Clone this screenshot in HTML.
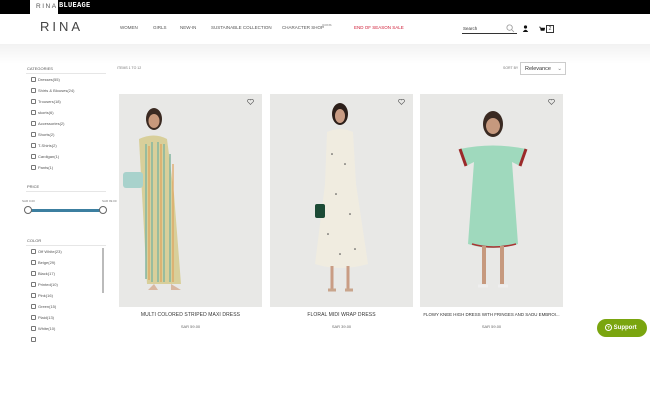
<!DOCTYPE html>
<html><head><meta charset="utf-8"><style>
*{margin:0;padding:0;box-sizing:border-box}
body{width:650px;height:400px;background:#fff;font-family:"Liberation Sans",sans-serif;position:relative;overflow:hidden;color:#333}
.abs{position:absolute}
.top{left:0;top:0;width:650px;height:14px;background:#000}
.t{font-size:4.5px;color:#555;white-space:nowrap}
.cb{position:absolute;left:31px;width:5px;height:5px;border:0.6px solid #777;border-radius:1px}
.cl{position:absolute;left:38px;font-size:4px;color:#555}
.img{position:absolute;top:94px;width:143px;height:213px;background:#e8e8e6;overflow:hidden}
.name{position:absolute;top:312px;font-size:5px;color:#333;text-align:center;width:143px;letter-spacing:.1px;white-space:nowrap;overflow:hidden}
.price{position:absolute;top:324px;font-size:4px;color:#666;text-align:center;width:143px}
</style></head><body>
<div class="abs top"></div>
<div class="abs" style="left:30px;top:0;width:28px;height:14px;background:#fff"></div>
<div class="abs" style="left:36px;top:3px;font-size:6.5px;letter-spacing:1.5px;color:#555">RINA</div>
<div class="abs" style="left:59px;top:2px;font-size:7px;font-weight:bold;color:#fff;font-family:'Liberation Mono',monospace;letter-spacing:.3px">BLUEAGE</div>
<div class="abs" style="left:40px;top:19px;font-size:13px;letter-spacing:3px;color:#444;font-weight:300">RINA</div>
<div class="abs t" style="left:120px;top:25px">WOMEN</div>
<div class="abs t" style="left:153px;top:25px">GIRLS</div>
<div class="abs t" style="left:180px;top:25px">NEW-IN</div>
<div class="abs t" style="left:211px;top:25px">SUSTAINABLE COLLECTION</div>
<div class="abs t" style="left:282px;top:25px">CHARACTER SHOP</div>
<div class="abs" style="left:322px;top:23px;font-size:3px;color:#777">ICONS</div>
<div class="abs t" style="left:354px;top:25px;color:#d0203a">END OF SEASON SALE</div>
<div class="abs t" style="left:463px;top:26px;color:#333">Search</div>
<div class="abs" style="left:462px;top:33px;width:55px;height:1px;background:#333"></div>
<svg class="abs" style="left:506px;top:24px" width="9" height="9" viewBox="0 0 9 9"><circle cx="3.6" cy="3.6" r="2.7" fill="none" stroke="#999" stroke-width=".8"/><path d="M5.6 5.6L8 8" stroke="#999" stroke-width=".8"/></svg>
<svg class="abs" style="left:522px;top:25px" width="7" height="7" viewBox="0 0 7 7"><circle cx="3.5" cy="2" r="1.6" fill="#111"/><path d="M0.8 7Q3.5 2.5 6.2 7Z" fill="#111"/></svg>
<svg class="abs" style="left:539px;top:26px" width="6" height="6" viewBox="0 0 6 6"><path d="M0 1H1.2L2 4.5H5.2L5.8 2H1.5" fill="#111" stroke="#111" stroke-width=".6"/></svg>
<div class="abs" style="left:546px;top:25px;width:8px;height:8px;border:0.6px solid #333;font-size:5px;text-align:center;line-height:7px">2</div>
<div class="abs" style="left:0;top:44px;width:650px;height:20px;background:linear-gradient(#f2f2f2,#fff)"></div>

<div class="abs" style="left:27px;top:66px;font-size:4px;color:#555">CATEGORIES</div>
<div class="abs" style="left:26px;top:73px;width:80px;height:1px;background:#e6e6e6"></div>
<div class="cb" style="top:77px"></div><div class="cl" style="top:77px">Dresses(55)</div>
<div class="cb" style="top:88px"></div><div class="cl" style="top:88px">Shirts &amp; Blouses(24)</div>
<div class="cb" style="top:99px"></div><div class="cl" style="top:99px">Trousers(18)</div>
<div class="cb" style="top:110px"></div><div class="cl" style="top:110px">skorts(6)</div>
<div class="cb" style="top:121px"></div><div class="cl" style="top:121px">Accessories(2)</div>
<div class="cb" style="top:132px"></div><div class="cl" style="top:132px">Shorts(2)</div>
<div class="cb" style="top:143px"></div><div class="cl" style="top:143px">T-Shirts(2)</div>
<div class="cb" style="top:154px"></div><div class="cl" style="top:154px">Cardigan(1)</div>
<div class="cb" style="top:165px"></div><div class="cl" style="top:165px">Pants(1)</div>
<div class="abs" style="left:27px;top:184px;font-size:4px;color:#555">PRICE</div>
<div class="abs" style="left:26px;top:191px;width:80px;height:1px;background:#e6e6e6"></div>
<div class="abs" style="left:22px;top:199px;font-size:3px;color:#777">SAR 0.00</div>
<div class="abs" style="left:102px;top:199px;font-size:3px;color:#777">SAR 99.00</div>
<div class="abs" style="left:28px;top:209px;width:75px;height:3px;background:#3c7fa0"></div>
<div class="abs" style="left:24px;top:206px;width:8px;height:8px;border-radius:50%;border:1px solid #666;background:#fff"></div>
<div class="abs" style="left:99px;top:206px;width:8px;height:8px;border-radius:50%;border:1px solid #666;background:#fff"></div>
<div class="abs" style="left:27px;top:238px;font-size:4px;color:#555">COLOR</div>
<div class="abs" style="left:26px;top:245px;width:80px;height:1px;background:#e6e6e6"></div>
<div class="abs" style="left:102px;top:248px;width:2px;height:45px;background:#bbb"></div>
<div class="cb" style="top:249px"></div><div class="cl" style="top:249px">Off White(23)</div>
<div class="cb" style="top:260px"></div><div class="cl" style="top:260px">Beige(29)</div>
<div class="cb" style="top:271px"></div><div class="cl" style="top:271px">Black(17)</div>
<div class="cb" style="top:282px"></div><div class="cl" style="top:282px">Printed(10)</div>
<div class="cb" style="top:293px"></div><div class="cl" style="top:293px">Pink(16)</div>
<div class="cb" style="top:304px"></div><div class="cl" style="top:304px">Green(15)</div>
<div class="cb" style="top:315px"></div><div class="cl" style="top:315px">Plaid(13)</div>
<div class="cb" style="top:326px"></div><div class="cl" style="top:326px">White(10)</div>
<div class="cb" style="top:337px"></div>

<div class="abs" style="left:117px;top:66px;font-size:3.5px;color:#777">ITEMS 1 TO 12</div>
<div class="abs" style="left:503px;top:66px;font-size:3.5px;color:#777">SORT BY</div>
<div class="abs" style="left:520px;top:62px;width:46px;height:13px;border:0.6px solid #ccc;font-size:5.5px;padding:3px 0 0 4px;color:#333">Relevance <span style="float:right;margin-right:3px;color:#777">⌄</span></div>

<div class="img" style="left:119px">
<svg width="143" height="213" viewBox="0 0 143 213"><ellipse cx="35" cy="25" rx="8" ry="11" fill="#3b2a22"/><ellipse cx="35" cy="27" rx="5.5" ry="7" fill="#c9997c"/><path d="M20 45Q35 38 48 45L55 100L62 190H28L23 100Z" fill="#d8cf9a"/><path d="M27 50V185M33 48V188M39 48V188M45 50V188M51 60V188" stroke="#82b6a0" stroke-width="1.5"/><path d="M30 52V186M42 50V188M54 70V188" stroke="#e0a15a" stroke-width="1.2"/><rect x="4" y="78" width="20" height="16" rx="3" fill="#a8d2cc"/><path d="M35 190l-6 6h10zM52 190l0 6h10z" fill="#d9b7a0"/></svg>
<svg class="abs" style="left:128px;top:5px" width="7" height="6" viewBox="0 0 7 6"><path d="M3.5 5.5L0.7 2.7A1.4 1.4 0 0 1 3.5 1A1.4 1.4 0 0 1 6.3 2.7Z" fill="none" stroke="#555" stroke-width=".6"/></svg></div>
<div class="img" style="left:270px">
<svg width="143" height="213" viewBox="0 0 143 213"><ellipse cx="70" cy="20" rx="8" ry="11" fill="#2c1f1a"/><ellipse cx="70" cy="22" rx="5" ry="7" fill="#c99c84"/><path d="M57 38Q70 32 83 38L86 90L98 170Q70 178 45 170L55 90Z" fill="#f0ece0"/><g fill="#444"><circle cx="62" cy="60" r=".8"/><circle cx="75" cy="70" r=".8"/><circle cx="66" cy="100" r=".8"/><circle cx="80" cy="120" r=".8"/><circle cx="58" cy="140" r=".8"/><circle cx="85" cy="155" r=".8"/><circle cx="70" cy="160" r=".8"/></g><rect x="45" y="110" width="10" height="14" rx="2" fill="#1b4a35"/><path d="M62 172V195M78 172V195" stroke="#c99c84" stroke-width="3"/><path d="M58 196h8M75 196h8" stroke="#c9a58c" stroke-width="3"/></svg>
<svg class="abs" style="left:128px;top:5px" width="7" height="6" viewBox="0 0 7 6"><path d="M3.5 5.5L0.7 2.7A1.4 1.4 0 0 1 3.5 1A1.4 1.4 0 0 1 6.3 2.7Z" fill="none" stroke="#555" stroke-width=".6"/></svg></div>
<div class="img" style="left:420px">
<svg width="143" height="213" viewBox="0 0 143 213"><ellipse cx="73" cy="30" rx="10" ry="13" fill="#3a2a22"/><ellipse cx="73" cy="32" rx="7" ry="8" fill="#c6997e"/><path d="M40 55Q73 48 106 55L100 72L92 68L98 150Q73 158 48 150L54 68L46 72Z" fill="#9fd9bd"/><path d="M40 55L46 72M106 55L100 72" stroke="#9b2a2a" stroke-width="3"/><path d="M52 150Q73 156 96 150" stroke="#a33" stroke-width="1.5" fill="none"/><path d="M64 152V190M82 152V190" stroke="#c6997e" stroke-width="4"/><path d="M58 192h10M78 192h10" stroke="#eee" stroke-width="3"/></svg>
<svg class="abs" style="left:128px;top:5px" width="7" height="6" viewBox="0 0 7 6"><path d="M3.5 5.5L0.7 2.7A1.4 1.4 0 0 1 3.5 1A1.4 1.4 0 0 1 6.3 2.7Z" fill="none" stroke="#555" stroke-width=".6"/></svg></div>

<div class="name" style="left:119px">MULTI COLORED STRIPED MAXI DRESS</div>
<div class="price" style="left:119px">SAR 59.00</div>
<div class="name" style="left:270px">FLORAL MIDI WRAP DRESS</div>
<div class="price" style="left:270px">SAR 39.00</div>
<div class="name" style="left:420px;font-size:4.4px;letter-spacing:0">FLOWY KNEE HIGH DRESS WITH FRINGES AND SADU EMBROI...</div>
<div class="price" style="left:420px">SAR 59.00</div>

<div class="abs" style="left:597px;top:319px;width:50px;height:18px;border-radius:9px;background:#7aa50f;color:#fff;font-size:6px;font-weight:bold;line-height:18px;padding-left:8px"><span style="display:inline-block;width:7px;height:7px;border:1px solid #fff;border-radius:50%;font-size:4.5px;line-height:5px;text-align:center;vertical-align:0">?</span> Support</div>
</body></html>
